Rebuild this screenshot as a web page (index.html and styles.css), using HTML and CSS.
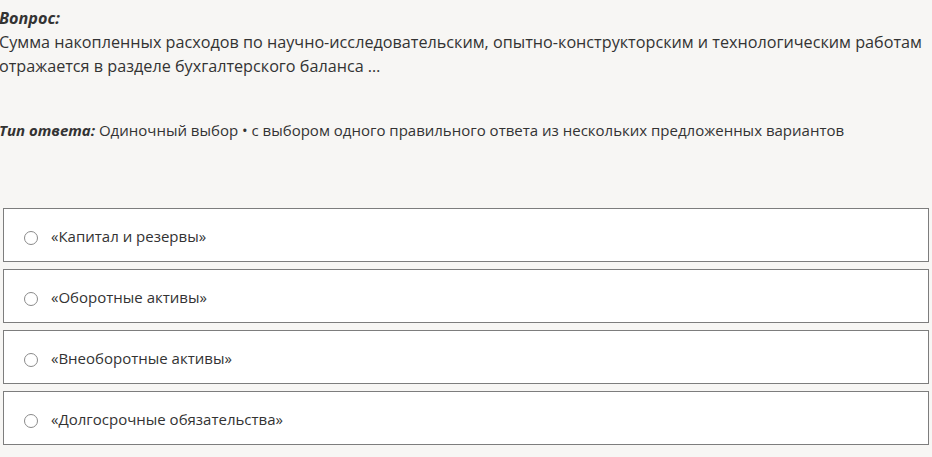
FILE: index.html
```html
<!DOCTYPE html>
<html lang="ru">
<head>
    <meta charset="UTF-8">
    <meta name="viewport" content="width=device-width, initial-scale=1.0">
    <title>Вопрос</title>
    <link rel="stylesheet" href="styles.css">
</head>
<body>
    <div class="question">
        <div class="question-label">Вопрос:</div>
        <div class="question-text">Сумма накопленных расходов по научно-исследовательским, опытно-конструкторским и технологическим работам отражается в разделе бухгалтерского баланса …</div>
    </div>

    <div class="answer-type">
        <span class="answer-type-label">Тип ответа:</span> Одиночный выбор • с выбором одного правильного ответа из нескольких предложенных вариантов
    </div>

    <ul class="options">
        <li class="option"><span class="radio"></span>«Капитал и резервы»</li>
        <li class="option"><span class="radio"></span>«Оборотные активы»</li>
        <li class="option"><span class="radio"></span>«Внеоборотные активы»</li>
        <li class="option"><span class="radio"></span>«Долгосрочные обязательства»</li>
    </ul>
</body>
</html>
```

FILE: styles.css
```css
body {
    font-family: 'Open Sans', 'Noto Sans', sans-serif;
    font-size: 16px;
    line-height: 24px;
    margin: 0;
    padding: 6px 3px 0 0;
    background-color: #f7f6f4;
    color: #333;
}

.question {
    margin-left: -1px;
    font-size: 16.2px;
}

.question-label,
.answer-type-label {
    font-weight: bold;
    font-style: italic;
}

.answer-type {
    margin: 40px 0 0 -1px;
    font-size: 15px;
}

.options {
    list-style: none;
    margin: 66px 0 0 3px;
    padding: 0;
    display: flex;
    flex-direction: column;
    gap: 7px;
}

.option {
    display: flex;
    align-items: center;
    background-color: #fff;
    border: 1px solid #7d7d7d;
    padding: 16px 20px 14px;
    font-size: 15px;
    line-height: 22px;
}

.radio {
    width: 12px;
    height: 12px;
    border: 1px solid #8a8a8a;
    border-radius: 50%;
    margin: 4px 13px 0 0;
    flex-shrink: 0;
}
```
